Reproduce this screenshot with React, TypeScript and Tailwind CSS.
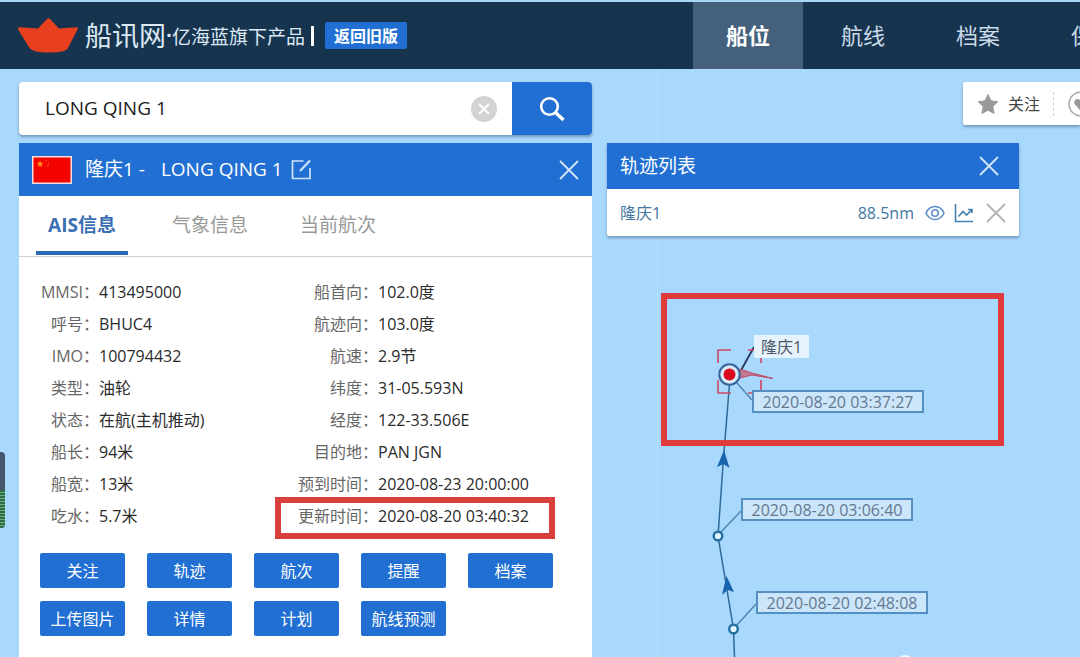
import clsx from "clsx";
import { useState } from "react";

type Field = {
  label: string;
  value: string;
  marked?: boolean;
};

const leftFields: Field[] = [
  { label: "MMSI", value: "413495000" },
  { label: "呼号", value: "BHUC4" },
  { label: "IMO", value: "100794432" },
  { label: "类型", value: "油轮" },
  { label: "状态", value: "在航(主机推动)" },
  { label: "船长", value: "94米" },
  { label: "船宽", value: "13米" },
  { label: "吃水", value: "5.7米" },
];

const rightFields: Field[] = [
  { label: "船首向", value: "102.0度" },
  { label: "航迹向", value: "103.0度" },
  { label: "航速", value: "2.9节" },
  { label: "纬度", value: "31-05.593N" },
  { label: "经度", value: "122-33.506E" },
  { label: "目的地", value: "PAN JGN" },
  { label: "预到时间", value: "2020-08-23 20:00:00" },
  { label: "更新时间", value: "2020-08-20 03:40:32", marked: true },
];

const navItems = ["船位", "航线", "档案", "保险"];
const tabs = ["AIS信息", "气象信息", "当前航次"];
const actions = ["关注", "轨迹", "航次", "提醒", "档案", "上传图片", "详情", "计划", "航线预测"];

function CloseIcon({ className }: { className?: string }) {
  return (
    <svg viewBox="0 0 20 20" className={clsx("size-5", className)} fill="none" stroke="currentColor" strokeWidth="1.8">
      <path d="M1 1l18 18M19 1L1 19" />
    </svg>
  );
}

function Flag() {
  return (
    <svg viewBox="0 0 40 28" className="h-7 w-10">
      <rect width="40" height="28" fill="#f6dcdc" />
      <rect x="1.5" y="1.5" width="37" height="25" fill="#f40400" />
      <path d="M8 4.5l1 2.2 2.4.3-1.8 1.6.5 2.4L8 9.8 5.9 11l.5-2.4L4.6 7l2.4-.3z" fill="#ff8a1c" />
      <circle cx="14" cy="4.5" r=".8" fill="#ff5a14" />
      <circle cx="16.5" cy="7" r=".8" fill="#ff5a14" />
      <circle cx="16" cy="10" r=".8" fill="#ff5a14" />
    </svg>
  );
}

function Header() {
  return (
    <header className="flex h-[69px] overflow-hidden border-t-2 border-[#a5d6f3] bg-[#17344f]">
      <div className="flex w-[693px] shrink-0 items-center pl-[18px] text-[#dbe9f5]">
        <svg viewBox="0 0 60 36" className="h-9 w-[60px]">
          <path
            d="M0 10.500Q0 9 2 9.200L20 10.500 29 1Q30.500-.3 32 1L41 10.500 58 9.200Q60.500 9 59.700 11L50 30Q48 34.500 31 34.500 15 34.500 11.500 30L.5 12Z"
            fill="#e8401f"
          />
        </svg>
        <h1 className="ml-[7px] text-[27px] leading-[36px]">船讯网</h1>
        <span className="w-[6px] text-center text-[19px] font-bold">·</span>
        <span className="pt-[3px] text-[19px]">亿海蓝旗下产品</span>
        <span className="ml-[6px] h-5 w-[3px] bg-white" />
        <button className="ml-[11px] h-[27px] w-[82px] rounded-xs bg-[#216fd3] text-base leading-none font-bold text-white">
          返回旧版
        </button>
      </div>
      <nav className="flex shrink-0 gap-[5px]">
        {navItems.map((item, i) => (
          <a
            key={item}
            href="#"
            className={clsx(
              "flex w-[110px] shrink-0 items-center justify-center text-[22px]",
              i === 0 ? "bg-[#44607c] font-bold text-white" : "text-[#cbdbe9]",
            )}
          >
            {item}
          </a>
        ))}
      </nav>
    </header>
  );
}

function SearchBar() {
  const [keyword, setKeyword] = useState("LONG QING 1");

  return (
    <form className="flex h-[53px] shrink-0 overflow-hidden rounded-sm bg-white shadow-[0_2px_3px_rgba(60,90,120,0.5)]">
      <input
        aria-label="搜索船舶"
        value={keyword}
        onChange={(e) => setKeyword(e.target.value)}
        className="min-w-0 flex-1 pl-[26px] text-[19px] text-[#1c1c1c] outline-none"
      />
      <button
        type="button"
        aria-label="清空"
        onClick={() => setKeyword("")}
        className="mr-[15px] flex size-[26px] items-center justify-center self-center rounded-full bg-[#d3d3d3] text-white"
      >
        <svg viewBox="0 0 12 12" className="size-3" fill="none" stroke="currentColor" strokeWidth="1.8">
          <path d="M1 1l10 10M11 1L1 11" />
        </svg>
      </button>
      <button type="button" aria-label="搜索" className="flex w-20 items-center justify-center bg-[#216fd3] text-white">
        <svg viewBox="0 0 26 26" className="size-[26px]" fill="none" stroke="currentColor">
          <circle cx="10.5" cy="10.5" r="8.3" strokeWidth="2.6" />
          <path d="M16.500 16.500l8 7.500" strokeWidth="3.4" />
        </svg>
      </button>
    </form>
  );
}

function FieldList({ fields }: { fields: Field[] }) {
  return (
    <dl>
      {fields.map((field) => (
        <div key={field.label} className="relative flex h-8 items-center whitespace-nowrap">
          <dt className="flex w-20 justify-end text-[#666]">{field.label}：</dt>
          <dd className="text-[#2b2b2b]">{field.value}</dd>
          {field.marked && (
            <div className="absolute -top-[3px] -left-[23px] h-[42px] w-[280px] border-[6px] border-[#d9403d]" />
          )}
        </div>
      ))}
    </dl>
  );
}

function ShipPanel() {
  const [active, setActive] = useState(tabs[0]);

  return (
    <section className="flex flex-1 flex-col bg-white">
      <div className="flex h-[53px] items-center bg-[#216fd3] pr-[13px] pl-[13px] text-[19px] text-white">
        <Flag />
        <h2 className="ml-[13px] flex items-center">
          <span>隆庆1 -</span>
          <span className="ml-4">LONG QING 1</span>
        </h2>
        <button aria-label="编辑" className="ml-2">
          <svg viewBox="0 0 21 21" className="size-[21px]" fill="none" stroke="#cfe4fb" strokeWidth="1.7">
            <path d="M12.500 2H1.500v17.500h17.500V9" />
            <path d="M9 12L19 1.500" strokeWidth="2.2" />
          </svg>
        </button>
        <button aria-label="关闭" className="ml-auto text-[#d3e6fa]">
          <CloseIcon />
        </button>
      </div>
      <div role="tablist" className="flex h-[61px] items-start gap-9 border-b border-[#cfcfcf] pl-[17px]">
        {tabs.map((tab) => (
          <button
            key={tab}
            role="tab"
            aria-selected={tab === active}
            onClick={() => setActive(tab)}
            className={clsx(
              "h-[59px] w-[92px] border-b-4 pt-1 text-[19px]",
              tab === active ? "border-[#2a6ab5] font-bold text-[#3a70b3]" : "border-transparent text-[#999]",
            )}
          >
            {tab}
          </button>
        ))}
      </div>
      <div className="grid grid-cols-[279px_1fr] pt-[19px] text-base">
        <FieldList fields={leftFields} />
        <FieldList fields={rightFields} />
      </div>
      <div className="flex flex-wrap gap-x-[22px] gap-y-[13px] px-[21px] py-[21px]">
        {actions.map((action) => (
          <button key={action} className="h-[35px] w-[85px] rounded-xs bg-[#216fd3] text-base text-white">
            {action}
          </button>
        ))}
      </div>
    </section>
  );
}

function TrackPanel() {
  return (
    <section className="w-[412px] rounded-xs bg-white shadow-[0_2px_3px_rgba(60,90,120,0.5)]">
      <div className="flex h-[46px] items-center justify-between bg-[#216fd3] pr-5 pl-[13px] text-white">
        <h2 className="text-[19px]">轨迹列表</h2>
        <button aria-label="关闭" className="text-[#d3e6fa]">
          <CloseIcon />
        </button>
      </div>
      <div className="flex h-[47px] items-center pr-[13px] pl-[13px] text-base text-[#44779f]">
        <span>隆庆1</span>
        <span className="ml-auto">88.5nm</span>
        <button aria-label="显示" className="ml-[11px]">
          <svg viewBox="0 0 20 16" className="h-4 w-5" fill="none" stroke="#5b8fcb" strokeWidth="1.6">
            <path d="M1 8C3 3.500 6.300 1.500 10 1.500S17 3.500 19 8c-2 4.500-5.300 6.500-9 6.500S3 12.500 1 8z" />
            <circle cx="10" cy="8" r="3.3" />
          </svg>
        </button>
        <button aria-label="图表" className="ml-[9px]">
          <svg viewBox="0 0 20 20" className="size-5" fill="none" stroke="#4581ad" strokeWidth="1.6">
            <path d="M1.500 1v17.500H19" />
            <path d="M4.500 13.500l4.500-5 3.500 3.500L18 6.500M14 6.500h4v3.500" />
          </svg>
        </button>
        <button aria-label="删除" className="ml-3 text-[#b3b3b3]">
          <CloseIcon />
        </button>
      </div>
    </section>
  );
}

function FollowBar() {
  return (
    <div className="absolute top-[13px] right-0 flex h-[43px] w-[117px] items-center overflow-hidden rounded-l-xs bg-white shadow-[0_2px_3px_rgba(60,90,120,0.5)]">
      <button className="flex shrink-0 items-center pl-[14px] text-base text-[#444]">
        <svg viewBox="0 0 22 22" className="mr-[9px] size-[22px]" fill="#999" stroke="#999" strokeLinejoin="round">
          <path d="M11 1.500l3 6.300 6.800.9-5 4.800 1.300 7L11 17.200l-6.100 3.300 1.300-7-5-4.800 6.800-.9z" />
        </svg>
        关注
      </button>
      <span className="ml-[13px] h-6 shrink-0 border-l border-dashed border-[#ccc]" />
      <button aria-label="收藏" className="ml-[14px] shrink-0">
        <svg viewBox="0 0 26 26" className="size-[26px]">
          <circle cx="13" cy="13" r="12" fill="none" stroke="#a9a9a9" strokeWidth="1.5" />
          <path d="M13 20.500L7 13.500C4.500 10 8.500 5.500 13 9.500 17.500 5.500 21.500 10 19 13.500z" fill="#999" />
        </svg>
      </button>
    </div>
  );
}

function MapTag({ className, children }: { className: string; children: string }) {
  return (
    <div
      className={clsx(
        "absolute flex h-[23px] w-[172px] items-center justify-center border-2 border-[#5490c2] bg-[#cbe6fb] text-base leading-none whitespace-nowrap text-[#65788e]",
        className,
      )}
    >
      {children}
    </div>
  );
}

function TrackMap() {
  return (
    <div className="absolute inset-0 overflow-hidden">
      <div className="absolute inset-y-0 left-[657px] w-px bg-[#b7e0ff]" />
      <svg viewBox="607 249 473 408" className="absolute top-[180px] left-[607px] h-[408px] w-[473px]" fill="none">
        <path d="M729.500 384L723.500 458 718 536 733.500 629 734.500 657" stroke="#2d6a99" strokeWidth="1.5" />
        <path d="M737 383l15 17M720 533l21-22M736 626l20-22" stroke="#4f86b5" strokeWidth="1.5" />
        <path d="M740 372l14-25" stroke="#26365c" strokeWidth="1.8" />
        <path d="M731 350h-13v13M718 380v13h13M748 350h13v13M761 380v13h-13" stroke="#cf4663" strokeWidth="1.6" />
        <path d="M740 369l12 4 21 5.500-21-3.500-12 3z" fill="#c3788f" stroke="#bd4a67" />
        <circle cx="729.5" cy="374.5" r="10.2" fill="#d6ebfb" stroke="#35639a" strokeWidth="2" />
        <circle cx="729.5" cy="374.5" r="6" fill="#dc0a1e" />
        <path d="M724 450l5.500 18-6-4-6.500 3z" fill="#1763ae" />
        <path d="M726.500 576l7.500 16-6.500-2-5.500 5z" fill="#1763ae" />
        <circle cx="718" cy="536" r="4.3" fill="#e3f4ff" stroke="#21709f" strokeWidth="2.4" />
        <circle cx="733.5" cy="629" r="4.3" fill="#e3f4ff" stroke="#21709f" strokeWidth="2.4" />
        <circle cx="905" cy="664" r="9" fill="#e8f8ff" />
      </svg>
      <div className="absolute top-[266px] left-[754px] flex h-[23px] w-[55px] items-center justify-center bg-[#e6f3fd] text-base text-[#4c5866]">
        隆庆1
      </div>
      <MapTag className="top-[321px] left-[752px]">2020-08-20 03:37:27</MapTag>
      <MapTag className="top-[429px] left-[741px]">2020-08-20 03:06:40</MapTag>
      <MapTag className="top-[522px] left-[756px]">2020-08-20 02:48:08</MapTag>
      <div className="absolute top-[224px] left-[661px] h-[153px] w-[343px] border-[6px] border-[#e13a3d]" />
      <div className="absolute top-[383px] -left-1 flex h-[76px] w-[9px] flex-col overflow-hidden rounded-r-sm bg-[#45566b]">
        <div className="mt-auto h-[38px] bg-[repeating-linear-gradient(#2f6b4a_0_2px,#69b376_2px_3px)]" />
      </div>
    </div>
  );
}

export default function App() {
  return (
    <div className="flex min-h-screen flex-col bg-[#a9d8fd] font-['Open_Sans','Noto_Sans_CJK_SC',sans-serif]">
      <Header />
      <main className="relative flex flex-1 gap-[15px] overflow-hidden pl-[19px]">
        <TrackMap />
        <div className="relative flex w-[573px] shrink-0 flex-col gap-2 pt-[13px]">
          <SearchBar />
          <ShipPanel />
        </div>
        <div className="relative shrink-0 pt-[74px]">
          <TrackPanel />
        </div>
        <FollowBar />
      </main>
    </div>
  );
}
